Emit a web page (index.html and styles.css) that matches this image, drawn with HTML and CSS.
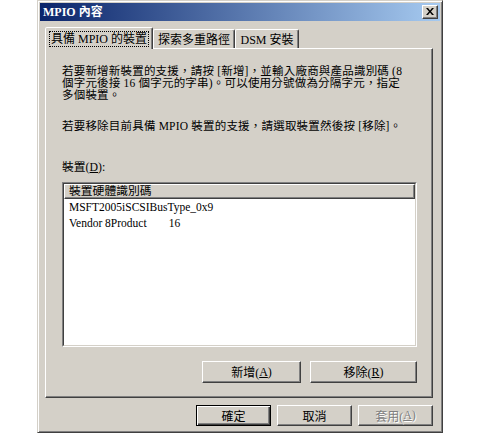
FILE: index.html
```html
<!DOCTYPE html>
<html lang="zh-Hant">
<head>
<meta charset="utf-8">
<title>MPIO 內容</title>
<link rel="stylesheet" href="styles.css">
</head>
<body>
<div class="stage">
  <div class="window">
    <div class="titlebar">
      <span class="title">MPIO 內容</span>
      <span class="close">
        <svg width="8" height="7" viewBox="0 0 8 7"><path d="M0 0h2l2 2.5L6 0h2L5 3.5 8 7H6L4 4.5 2 7H0l3-3.5z" fill="#000"/></svg>
      </span>
    </div>
    <div class="client">
      <div class="tabs">
        <div class="tab tab-active"><span class="focus">具備 MPIO 的裝置</span></div>
        <div class="tab tab-2">探索多重路徑</div>
        <div class="tab tab-3">DSM 安裝</div>
      </div>
      <div class="panel">
        <p class="para">若要新增新裝置的支援，請按 [新增]，並輸入廠商與產品識別碼 (8<br>個字元後接 16 個字元的字串)。可以使用分號做為分隔字元，指定<br>多個裝置。</p>
        <p class="para para-2">若要移除目前具備 MPIO 裝置的支援，請選取裝置然後按 [移除]。</p>
        <div class="label">裝置(<u>D</u>):</div>
        <div class="listbox">
          <div class="listbox-inner">
            <div class="list-header"><span>裝置硬體識別碼</span></div>
            <div class="list-item">MSFT2005iSCSIBusType_0x9</div>
            <div class="list-item">Vendor 8Product<span class="gap">16</span></div>
          </div>
        </div>
        <div class="row row-panel">
          <div class="btn btn-add">新增(<u>A</u>)</div>
          <div class="btn btn-remove">移除(<u>R</u>)</div>
        </div>
      </div>
      <div class="row row-dialog">
        <div class="btn btn-std btn-default">確定</div>
        <div class="btn btn-std">取消</div>
        <div class="btn btn-std btn-disabled">套用(<u>A</u>)</div>
      </div>
    </div>
  </div>
</div>
</body>
</html>
```
FILE: styles.css
```css
html, body {
  margin: 0;
  padding: 0;
  background: #ffffff;
}

body {
  font-family: "Liberation Serif", "Noto Sans CJK TC", serif;
  font-size: 12px;
  color: #000;
}

.stage {
  display: flex;
  padding-left: 37px;
}

.window {
  width: 406px;
  height: 433px;
  box-sizing: border-box;
  background: #d4d0c8;
  border: 1px solid;
  border-color: #d4d0c8 #404040 #404040 #d4d0c8;
  box-shadow: inset 1px 1px #ffffff, inset -1px -1px #808080;
  padding: 2px;
  display: flex;
  flex-direction: column;
}

.titlebar {
  height: 18px;
  display: flex;
  align-items: center;
  justify-content: space-between;
  background: linear-gradient(to right, #0a246a, #a6caf0);
  padding: 0 2px 0 3px;
}

.title {
  color: #fff;
  font-weight: bold;
  font-size: 12px;
  line-height: 18px;
}

.close {
  width: 16px;
  height: 14px;
  box-sizing: border-box;
  background: #d4d0c8;
  border: 1px solid;
  border-color: #ffffff #404040 #404040 #ffffff;
  box-shadow: inset -1px -1px #808080;
  display: flex;
  align-items: center;
  justify-content: center;
  padding: 0 1px 1px 0;
}

.close svg {
  display: block;
}

.client {
  padding: 6px 7px 0 5px;
  display: flex;
  flex-direction: column;
}

.tabs {
  display: flex;
  align-items: flex-end;
  height: 21px;
  padding-left: 1px;
}

.tab {
  height: 19px;
  box-sizing: border-box;
  border: 1px solid;
  border-bottom: none;
  border-color: #ffffff #404040 transparent #ffffff;
  box-shadow: inset -1px 0 #808080;
  border-radius: 2px 2px 0 0;
  display: flex;
  align-items: center;
  justify-content: center;
  font-size: 12px;
  white-space: nowrap;
}

.tab-active {
  width: 108px;
  height: 22px;
  margin-bottom: -1px;
  margin-left: -1px;
  background: #d4d0c8;
  position: relative;
  z-index: 1;
}

.focus {
  outline: 1px dotted #000;
  padding: 0 1px;
  line-height: 14px;
}

.tab-2 {
  width: 82px;
}

.tab-3 {
  width: 64px;
}

.panel {
  width: 388px;
  height: 350px;
  box-sizing: border-box;
  border: 1px solid;
  border-color: #ffffff #404040 #404040 #ffffff;
  box-shadow: inset -1px -1px #808080;
  padding: 16px 15px 0 16px;
  display: flex;
  flex-direction: column;
}

.para {
  margin: 0;
  font-size: 11.5px;
  line-height: 12px;
  letter-spacing: 0.2px;
  white-space: nowrap;
}

.para-2 {
  margin-top: 19px;
}

.label {
  margin-top: 29px;
  font-size: 11.8px;
  line-height: 12px;
}

.listbox {
  margin-top: 9px;
  width: 355px;
  height: 165px;
  box-sizing: border-box;
  border: 1px solid;
  border-color: #808080 #ffffff #ffffff #808080;
}

.listbox-inner {
  height: 100%;
  box-sizing: border-box;
  border: 1px solid;
  border-color: #404040 #d4d0c8 #d4d0c8 #404040;
  background: #ffffff;
}

.list-header {
  height: 15px;
  box-sizing: border-box;
  background: #d4d0c8;
  border: 1px solid;
  border-color: #ffffff #404040 #404040 #ffffff;
  box-shadow: inset -1px -1px #808080;
  padding-left: 4px;
  font-size: 11.8px;
  line-height: 13px;
}

.list-item {
  height: 16px;
  line-height: 16px;
  padding-left: 5px;
  font-size: 11.5px;
  white-space: nowrap;
}

.gap {
  margin-left: 22px;
}

.row {
  display: flex;
  justify-content: flex-end;
}

.row-panel {
  margin-top: 14px;
  gap: 9px;
}

.btn {
  box-sizing: border-box;
  height: 22px;
  background: #d4d0c8;
  border: 1px solid;
  border-color: #ffffff #404040 #404040 #ffffff;
  box-shadow: inset -1px -1px #808080;
  display: flex;
  align-items: center;
  justify-content: center;
  font-size: 12px;
  white-space: nowrap;
}

.btn-add {
  width: 99px;
}

.btn-remove {
  width: 107px;
}

.row-dialog {
  margin-top: 7px;
  gap: 6px;
}

.btn-std {
  width: 75px;
  height: 21px;
}

.btn-default {
  border: 1px solid #000;
  box-shadow: inset 1px 1px #ffffff, inset -1px -1px #404040, inset -2px -2px #808080;
}

.btn-disabled {
  color: #808080;
  text-shadow: 1px 1px #ffffff;
}
```
